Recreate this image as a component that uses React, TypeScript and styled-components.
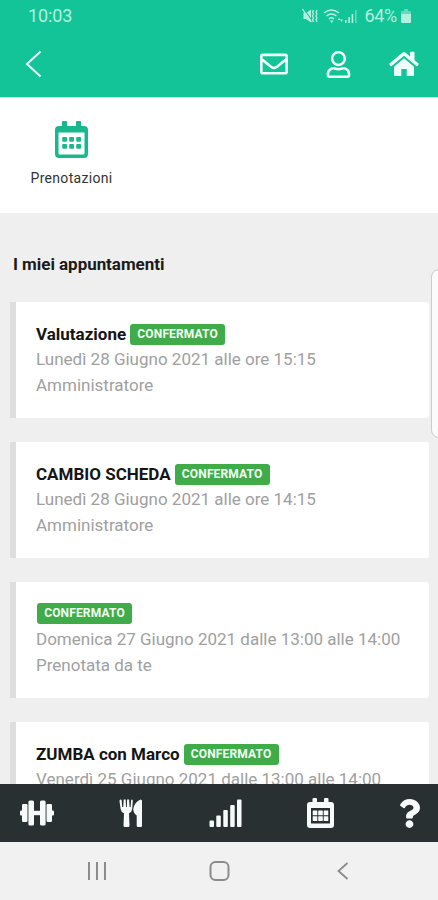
import React from "react";
import styled, { createGlobalStyle } from "styled-components";
import { FaQuestion, FaRegEnvelope, FaRegUser } from "react-icons/fa";

const GlobalStyle = createGlobalStyle`
  * { box-sizing: border-box; }
  body { margin: 0; background: #efefef; font-family: Roboto, "Liberation Sans", sans-serif; }
  svg { display: block; flex: none; }
`;

const Screen = styled.div`
  position: relative;
  width: 438px;
  height: 900px;
  display: flex;
  flex-direction: column;
  overflow: hidden;
  background: #efefef;
`;

const Header = styled.header`
  flex: none;
  height: 98px;
  background: #12c498;
  border-bottom: 1px solid #b9f3e6;
  color: #effffa;
`;

const StatusBar = styled.div`
  height: 31px;
  padding: 0 27px 0 28px;
  display: flex;
  align-items: center;
  justify-content: space-between;
  color: #b5f0df;
  font-size: 18px;
  line-height: 31px;
`;

const Clock = styled.span`
  letter-spacing: -0.1px;
`;

const StatusIcons = styled.div`
  display: flex;
  align-items: center;
`;

const SoundSlot = styled.span`
  margin-right: 5px;
`;

const BatteryLevel = styled.span`
  margin: 0 4px 0 6px;
  letter-spacing: -0.3px;
`;

const Toolbar = styled.nav`
  height: 66px;
  padding: 0 19px 0 25px;
  display: flex;
  align-items: center;
  justify-content: space-between;
`;

const ToolbarActions = styled.div`
  display: flex;
  align-items: center;
  gap: 37px;
`;

const Shortcuts = styled.section`
  flex: none;
  height: 115px;
  padding: 23px 0 0 20px;
  background: #fff;
`;

const Shortcut = styled.div`
  width: 103px;
  display: flex;
  flex-direction: column;
  align-items: center;
  gap: 10px;
  color: #333;
  font-size: 14px;
  line-height: 18px;
  letter-spacing: 0.3px;
`;

const Content = styled.main`
  flex: 1;
  min-height: 0;
  overflow: hidden;
  padding: 41px 9px 0 10px;
`;

const Title = styled.h1`
  margin: 0 0 27px 3px;
  font-size: 17px;
  font-weight: 700;
  line-height: 21px;
  letter-spacing: -0.04px;
  color: #1b1b1b;
`;

const CardList = styled.div`
  display: flex;
  flex-direction: column;
  gap: 24px;
`;

const Card = styled.article`
  height: 116px;
  padding: 20px;
  background: #fff;
  border-left: 6px solid #dedede;
  border-radius: 1px 3px 3px 1px;
`;

const CardHead = styled.div`
  display: flex;
  align-items: center;
  gap: 4px;
  height: 25px;
`;

const CardTitle = styled.h2`
  margin: 0;
  font-size: 17px;
  font-weight: 700;
  line-height: 25px;
  color: #151515;
  white-space: nowrap;
`;

const Badge = styled.span<{ $alone?: boolean }>`
  width: 95px;
  height: 21px;
  margin: ${(p) => (p.$alone ? "-2px 0 0 1px" : "0")};
  border-radius: 3px;
  background: #3fac49;
  color: #f2fff3;
  font-size: 12px;
  font-weight: 700;
  line-height: 21px;
  letter-spacing: 0.15px;
  text-align: center;
`;

const CardLine = styled.p`
  margin: 0;
  font-size: 17px;
  line-height: 25.6px;
  color: #a0a0a0;
  white-space: nowrap;
`;

const TabBar = styled.nav`
  flex: none;
  height: 58px;
  padding: 0 19px 0 20px;
  display: flex;
  align-items: center;
  justify-content: space-between;
  background: #283032;
  color: #f7fafa;
`;

const HelpSlot = styled.span`
  width: 20px;
  display: flex;
  justify-content: center;
`;

const SystemBar = styled.div`
  flex: none;
  height: 58px;
  padding: 0 89px 0 87px;
  display: grid;
  grid-template-columns: 122px 1fr auto;
  align-items: center;
  background: #f1f1f1;
  color: #8b8b8b;
`;

const EdgeHandle = styled.div`
  position: absolute;
  top: 269px;
  right: -10px;
  width: 17px;
  height: 169px;
  border: 1px solid #ccc;
  border-radius: 8px;
  background: #fbfbfb;
`;

const SoundOffIcon = () => (
  <svg width="16" height="16" viewBox="0 0 16 16" fill="currentColor">
    <path d="M1.500 5H4l5-3.500v13L4 11H1.500z" />
    <path d="M1.500.5l8.500 12" stroke="#12c498" strokeWidth="1.200" />
    <path d="M.5 1l9 13" stroke="currentColor" strokeWidth="1.300" />
    <path
      d="M11.500 2l-1 2 1 2-1 2 1 2-1 2 1 2M15 2l-1 2 1 2-1 2 1 2-1 2 1 2"
      fill="none"
      stroke="currentColor"
      strokeWidth="1.300"
    />
  </svg>
);

const WifiIcon = () => (
  <svg width="21" height="16" viewBox="0 0 21 16" fill="none" stroke="currentColor" strokeWidth="1.500">
    <path d="M1 5q7.500-6 15 0M3.500 8q5-4 10 0M6 10.800q2.500-2 5 0" />
    <path d="M7 12.500h3.500L8.700 15z" fill="currentColor" stroke="none" />
    <path d="M14.500 12l1.500-2 1.500 2zM17 11.500h3L18.500 14z" fill="currentColor" stroke="none" />
  </svg>
);

const CellIcon = () => (
  <svg width="14" height="16" viewBox="0 0 14 16" fill="currentColor">
    <rect x="1" y="12" width="1.600" height="3" />
    <rect x="4.300" y="9" width="1.600" height="6" />
    <rect x="7.600" y="6" width="1.600" height="9" />
    <rect x="11" y="2" width="1.600" height="13" opacity="0.5" />
  </svg>
);

const BatteryIcon = () => (
  <svg width="10" height="14" viewBox="0 0 10 14" fill="currentColor">
    <path d="M3 0h4v2h2q1 0 1 1v2H0V3q0-1 1-1h2z" opacity="0.5" />
    <path d="M0 5h10v8q0 1-1 1H1q-1 0-1-1z" />
  </svg>
);

const BackIcon = () => (
  <svg width="17" height="28" viewBox="0 0 17 28" fill="none" stroke="currentColor" strokeWidth="2">
    <path d="M15.500 1.500L2 14l13.500 12.500" />
  </svg>
);

const HouseIcon = () => (
  <svg width="30" height="26" viewBox="0 0 30 26" fill="currentColor">
    <path d="M15 7.300l10 8.500V24q0 1-1 1h-6.300v-7h-5.400v7H6q-1 0-1-1v-8.200z" />
    <path d="M13.600 1.500q1.400-1.200 2.800 0L21 5.400V1.500q0-.8.800-.8h2.900q.8 0 .8.800v7.700l4 3.400q.5.500.1 1l-1.200 1.400q-.5.500-1 .1L15 4.800 2.600 15.100q-.5.400-1-.1L.4 13.600q-.4-.5.100-1z" />
  </svg>
);

const BookingIcon = () => (
  <svg width="33" height="38" viewBox="0 0 33 38" fill="#16b88e">
    <path
      fillRule="evenodd"
      d="M7 1q0-1 1-1h3q1 0 1 1v4h9V1q0-1 1-1h3q1 0 1 1v4h3q4 0 4 4v24q0 4-4 4H4q-4 0-4-4V9q0-4 4-4h3zM3.500 11.500V32.500q0 1 1 1h24q1 0 1-1V11.500z"
    />
    {[16, 23].map((y) =>
      [7.2, 14.2, 21.2].map((x) => <rect key={`${x}-${y}`} x={x} y={y} width="4.800" height="4.800" rx="1" />)
    )}
  </svg>
);

const DumbbellIcon = () => (
  <svg width="34" height="26" viewBox="0 0 34 26" fill="currentColor">
    <rect x="0" y="10.500" width="4" height="5" rx="1" />
    <rect x="30" y="10.500" width="4" height="5" rx="1" />
    <rect x="12" y="10.800" width="10" height="4.400" />
    <rect x="2" y="4" width="5.500" height="18" rx="1.200" />
    <rect x="8.400" y="0.500" width="5.600" height="25" rx="1.500" />
    <rect x="20" y="0.500" width="5.600" height="25" rx="1.500" />
    <rect x="26.500" y="4" width="5.500" height="18" rx="1.200" />
  </svg>
);

const CutleryIcon = () => (
  <svg width="24" height="29" viewBox="0 0 24 29" fill="currentColor">
    <path d="M1.500.5q1 0 1.200 1L3.200 8h1L4.700.5h2L7 8h.8L8.100.5h2l.5 7.500h1l.5-6.500q.1-1 .9-1 .9 0 .8 1.500L13.200 10q-.4 3-3.200 4.200l.5 12.300q0 1.500-1.500 1.500H6q-1.500 0-1.500-1.500L5 14.200Q2 13 1.600 10L.5 2Q.4.500 1.500.500z" />
    <path d="M21.500.5q1.500 0 1.500 1.500v25q0 1-1 1h-3q-1.300 0-1.300-1.300V16.500Q14.300 14 14.300 10q.7-6.500 7.200-9.500z" />
  </svg>
);

const StatsIcon = () => (
  <svg width="33" height="29" viewBox="0 0 33 29" fill="currentColor">
    <rect x="0.500" y="21.500" width="4.500" height="6.500" rx="1" />
    <rect x="7.300" y="16.500" width="4.500" height="11.500" rx="1" />
    <rect x="14.300" y="11" width="4.500" height="17" rx="1" />
    <rect x="21.200" y="6" width="4.500" height="22" rx="1" />
    <rect x="28" y="0.500" width="4.500" height="27.500" rx="1" />
  </svg>
);

const CalendarTabIcon = () => (
  <svg width="27" height="30" viewBox="0 0 27 30" fill="currentColor">
    <path
      fillRule="evenodd"
      d="M5.500 1q0-1 1-1h2.500q1 0 1 1v3h7V1q0-1 1-1h2.500q1 0 1 1v3H24q3 0 3 3v20q0 3-3 3H3q-3 0-3-3V7q0-3 3-3h2.500zM4 10v15.500h19V10z"
    />
    {[12.5, 18.2].map((y) =>
      [5.7, 11.2, 16.7].map((x) => <rect key={`${x}-${y}`} x={x} y={y} width="4.600" height="4.800" rx="0.400" />)
    )}
  </svg>
);

const RecentsIcon = () => (
  <svg width="20" height="18" viewBox="0 0 20 18" stroke="currentColor" strokeWidth="2">
    <path d="M2 0v18M10 0v18M18 0v18" />
  </svg>
);

const HomeKeyIcon = () => (
  <svg width="21" height="20" viewBox="0 0 21 20" fill="none" stroke="currentColor" strokeWidth="2">
    <rect x="1.500" y="1" width="18" height="18" rx="5" />
  </svg>
);

const BackKeyIcon = () => (
  <svg width="12" height="18" viewBox="0 0 12 18" fill="none" stroke="currentColor" strokeWidth="1.800">
    <path d="M10.500 1L1.500 9l9 8" />
  </svg>
);

const appointments = [
  { title: "Valutazione", when: "Lunedì 28 Giugno 2021 alle ore 15:15", who: "Amministratore" },
  { title: "CAMBIO SCHEDA", when: "Lunedì 28 Giugno 2021 alle ore 14:15", who: "Amministratore" },
  { title: "", when: "Domenica 27 Giugno 2021 dalle 13:00 alle 14:00", who: "Prenotata da te" },
  { title: "ZUMBA con Marco", when: "Venerdì 25 Giugno 2021 dalle 13:00 alle 14:00", who: "" },
];

export default function App() {
  return (
    <>
      <GlobalStyle />
      <Screen>
        <Header>
          <StatusBar>
            <Clock>10:03</Clock>
            <StatusIcons>
              <SoundSlot>
                <SoundOffIcon />
              </SoundSlot>
              <WifiIcon />
              <CellIcon />
              <BatteryLevel>64%</BatteryLevel>
              <BatteryIcon />
            </StatusIcons>
          </StatusBar>
          <Toolbar>
            <BackIcon />
            <ToolbarActions>
              <FaRegEnvelope size={28} />
              <FaRegUser size={27} />
              <HouseIcon />
            </ToolbarActions>
          </Toolbar>
        </Header>
        <Shortcuts>
          <Shortcut>
            <BookingIcon />
            <span>Prenotazioni</span>
          </Shortcut>
        </Shortcuts>
        <Content>
          <Title>I miei appuntamenti</Title>
          <CardList>
            {appointments.map((a) => (
              <Card key={a.when}>
                <CardHead>
                  {a.title && <CardTitle>{a.title}</CardTitle>}
                  <Badge $alone={!a.title}>CONFERMATO</Badge>
                </CardHead>
                <CardLine>{a.when}</CardLine>
                {a.who && <CardLine>{a.who}</CardLine>}
              </Card>
            ))}
          </CardList>
        </Content>
        <TabBar>
          <DumbbellIcon />
          <CutleryIcon />
          <StatsIcon />
          <CalendarTabIcon />
          <HelpSlot>
            <FaQuestion size={29} />
          </HelpSlot>
        </TabBar>
        <SystemBar>
          <RecentsIcon />
          <HomeKeyIcon />
          <BackKeyIcon />
        </SystemBar>
        <EdgeHandle />
      </Screen>
    </>
  );
}
